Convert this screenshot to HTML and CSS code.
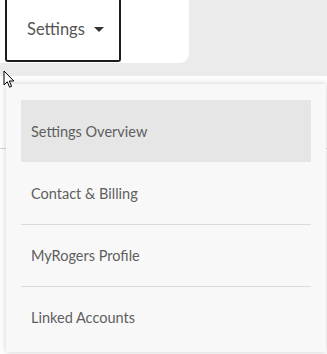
FILE: index.html
```html
<!DOCTYPE html>
<html lang="en">
<head>
    <meta charset="UTF-8">
    <meta name="viewport" content="width=device-width, initial-scale=1.0">
    <title>Settings</title>
    <link rel="stylesheet" href="styles.css">
</head>
<body>
    <div class="topbar">
        <div class="card">
            <div class="menuBtn">
                <span>Settings</span>
                <span class="caret"></span>
            </div>
        </div>
    </div>
    <div class="page">
        <div class="row"></div>

        <ul class="dropdown">
            <li class="active">Settings Overview</li>
            <li>Contact &amp; Billing</li>
            <li>MyRogers Profile</li>
            <li>Linked Accounts</li>
        </ul>

        <svg class="cursor" width="12" height="19" viewBox="0 0 12 19">
            <path d="M1 1 L1 15 L4.3 11.8 L6.6 17.2 L8.6 16.3 L6.3 11 L10.8 11 Z" fill="#fff" stroke="#000" stroke-width="1" stroke-linejoin="miter"/>
        </svg>
    </div>
</body>
</html>
```

FILE: styles.css
```css
*{
    margin: 0px;
    padding: 0px;
    list-style: none;
    box-sizing: border-box;
}
body{
    font-family: Lato, "Open Sans", sans-serif;
    background: #fdfdfd;
    width: 327px;
    height: 354px;
    overflow: hidden;
}
.topbar{
    height: 76px;
    background: #ebebeb;
}
.card{
    width: 189px;
    height: 63px;
    background: #fff;
    border-bottom-right-radius: 9px;
    padding-left: 5px;
}
.menuBtn{
    width: 116px;
    height: 62px;
    border: 2px solid #1c1c1c;
    border-top: none;
    border-radius: 0 0 3px 3px;
    display: flex;
    align-items: center;
    padding: 0 0 2px 20px;
    gap: 9px;
    font-size: 16.5px;
    color: #555;
}
.caret{
    width: 0;
    height: 0;
    border-left: 5px solid transparent;
    border-right: 5px solid transparent;
    border-top: 5px solid #333;
    margin-top: 1px;
}
.page{
    position: relative;
    height: 278px;
}
.row{
    height: 73px;
    border-bottom: 1px solid #d6d6d6;
}
.dropdown{
    position: absolute;
    top: 8px;
    left: 6px;
    width: 320px;
    background: #f8f8f8;
    padding: 16px 15px 4px 15px;
    box-shadow: 0 0 6px rgba(0, 0, 0, 0.18);
}
.dropdown li{
    height: 62px;
    display: flex;
    align-items: center;
    padding-left: 10px;
    font-size: 14.5px;
    color: #5e5e5e;
    border-top: 1px solid #dcdcdc;
}
.dropdown li:first-child,
.dropdown li.active + li{
    border-top: none;
}
.dropdown li.active{
    background: #e6e6e6;
}
.cursor{
    position: absolute;
    top: -6px;
    left: 3px;
}
```
